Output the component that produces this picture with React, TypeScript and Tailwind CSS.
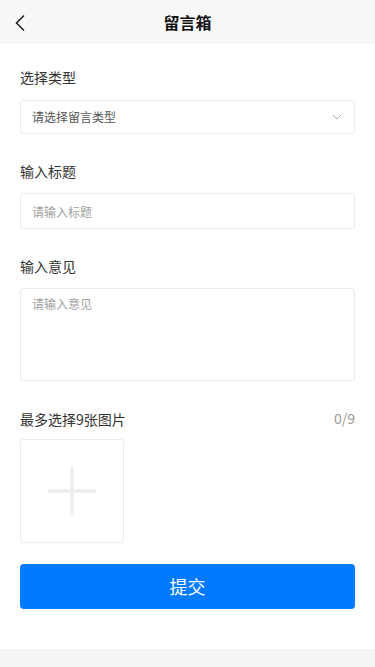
import { useState } from 'react';

const font = { fontFamily: '"Noto Sans CJK SC", "Liberation Sans", sans-serif' };

export default function App() {
  const [type, setType] = useState('');
  const [title, setTitle] = useState('');
  const [content, setContent] = useState('');

  return (
    <div className="min-h-[667px] bg-[#f5f5f7]" style={font}>
      {/* header */}
      <div className="relative flex h-[44px] items-center justify-center bg-[#f8f8f8]">
        <button className="absolute left-[10px] top-[10px] p-1">
          <svg width="12" height="18" viewBox="0 0 12 18" fill="none">
            <path d="M10 1.5 2.5 9l7.5 7.5" stroke="#222" strokeWidth="1.6" />
          </svg>
        </button>
        <div className="text-[16px] font-bold text-[#111]">留言箱</div>
      </div>

      <div className="bg-white px-[20px] pb-[40px] pt-[23px]">
        <div className="text-[14px] leading-[20px] text-[#333]">选择类型</div>
        <div className="mt-[13px] flex h-[34px] items-center justify-between rounded-[3px] border border-[#ebebeb] pl-[11px] pr-[12px]">
          <span className="text-[12px] text-[#555]">{type || '请选择留言类型'}</span>
          <svg width="10" height="7" viewBox="0 0 10 7" fill="none" onClick={() => setType('')}>
            <path d="M1 1l4 4 4-4" stroke="#aaa" strokeWidth="1" />
          </svg>
        </div>

        <div className="mt-[27px] text-[14px] leading-[20px] text-[#333]">输入标题</div>
        <input
          className="mt-[12px] h-[36px] w-full rounded-[3px] border border-[#ebebeb] px-[11px] text-[12px] text-[#333] outline-none placeholder:text-[#a0a0a0]"
          placeholder="请输入标题"
          value={title}
          onChange={(e) => setTitle(e.target.value)}
        />

        <div className="mt-[27px] text-[14px] leading-[20px] text-[#333]">输入意见</div>
        <textarea
          className="mt-[12px] block h-[93px] w-full resize-none rounded-[3px] border border-[#ebebeb] px-[11px] py-[6px] text-[12px] text-[#333] outline-none placeholder:text-[#a0a0a0]"
          placeholder="请输入意见"
          value={content}
          onChange={(e) => setContent(e.target.value)}
        />

        <div className="mt-[27px] flex items-center justify-between">
          <span className="text-[14px] leading-[20px] text-[#333]">最多选择9张图片</span>
          <span className="text-[14px] text-[#999]">0/9</span>
        </div>
        <div className="mt-[10px] flex h-[104px] w-[104px] items-center justify-center rounded-[3px] border border-[#ebebeb]">
          <svg width="52" height="52" viewBox="0 0 52 52">
            <rect x="24.5" y="2" width="3" height="48" fill="#ececf0" />
            <rect x="2" y="24.5" width="48" height="3" fill="#ececf0" />
          </svg>
        </div>

        <button className="mt-[21px] flex h-[45px] w-full items-center justify-center rounded-[4px] bg-[#007aff] text-[18px] text-white">
          提交
        </button>
      </div>
    </div>
  );
}
